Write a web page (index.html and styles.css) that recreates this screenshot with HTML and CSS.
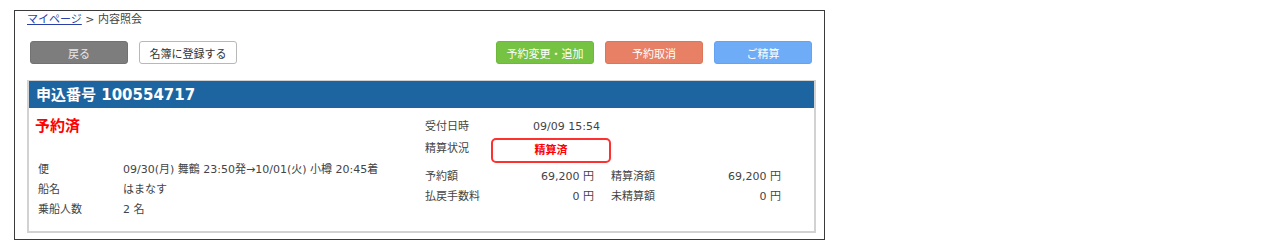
FILE: index.html
```html
<!DOCTYPE html>
<html lang="ja">
  <head>
    <meta charset="UTF-8" />
    <meta name="viewport" content="width=device-width, initial-scale=1.0" />
    <title>内容照会</title>
    <link rel="stylesheet" href="styles.css">
  </head>
  <body>
    <main class="frame">
      <nav class="breadcrumb">
        <a href="#">マイページ</a> &gt; 内容照会
      </nav>

      <div class="actions">
        <div class="actions__group">
          <button class="btn btn--back" type="button">戻る</button>
          <button class="btn btn--plain" type="button">名簿に登録する</button>
        </div>
        <div class="actions__group">
          <button class="btn btn--change" type="button">予約変更・追加</button>
          <button class="btn btn--cancel" type="button">予約取消</button>
          <button class="btn btn--pay" type="button">ご精算</button>
        </div>
      </div>

      <section class="card">
        <h1 class="card__title">申込番号 100554717</h1>

        <div class="card__body">
          <div class="trip">
            <p class="trip__status">予約済</p>
            <dl class="trip__rows">
              <dt>便</dt>
              <dd>09/30(月) 舞鶴 23:50発→10/01(火) 小樽 20:45着</dd>
              <dt>船名</dt>
              <dd>はまなす</dd>
              <dt>乗船人数</dt>
              <dd>2 名</dd>
            </dl>
          </div>

          <div class="payment">
            <dl class="payment__info">
              <dt>受付日時</dt>
              <dd>09/09 15:54</dd>
              <dt>精算状況</dt>
              <dd class="payment__state">精算済</dd>
            </dl>
            <dl class="payment__amounts">
              <dt>予約額</dt>
              <dd>69,200 円</dd>
              <dt>精算済額</dt>
              <dd>69,200 円</dd>
              <dt>払戻手数料</dt>
              <dd>0 円</dd>
              <dt>未精算額</dt>
              <dd>0 円</dd>
            </dl>
          </div>
        </div>
      </section>
    </main>
  </body>
</html>
```

FILE: styles.css
```css
html,
body {
  margin: 0;
  background: #fff;
  font-family: 'DejaVu Sans', 'Noto Sans CJK JP', sans-serif;
  font-size: 11px;
  color: #444;
}

dl,
dd,
p,
h1 {
  margin: 0;
}

.frame {
  box-sizing: border-box;
  width: 811px;
  height: 230px;
  margin: 10px 0 0 14px;
  padding: 0 8px 0 12px;
  border: 1px solid #3a3a3a;
}

.breadcrumb {
  height: 17px;
  line-height: 17px;
  color: #444;
}

.breadcrumb a {
  color: #2a3fa8;
}

.actions {
  display: flex;
  justify-content: space-between;
  margin: 13px 4px 16px 3px;
}

.actions__group {
  display: flex;
  gap: 11px;
}

.btn {
  box-sizing: border-box;
  width: 98px;
  height: 23px;
  padding: 0;
  border: 1px solid transparent;
  border-radius: 3px;
  font-family: inherit;
  font-size: 11px;
  color: #fff;
  cursor: pointer;
}

.btn--back {
  background: #7d7d7d;
  border-color: #727272;
  color: #e6e6e6;
}

.btn--plain {
  background: #fff;
  border-color: #b8b8b8;
  color: #333;
}

.btn--change {
  background: #76c343;
  border-color: #6db93b;
}

.btn--cancel {
  background: #e88065;
  border-color: #de7559;
}

.btn--pay {
  background: #6eacf8;
  border-color: #63a3f2;
}

.card {
  box-sizing: border-box;
  width: 789px;
  height: 153px;
  border: 2px solid #d2d2d2;
  border-top-width: 1px;
}

.card__title {
  height: 27px;
  line-height: 28px;
  padding-left: 7px;
  background: #1d65a0;
  color: #fff;
  font-size: 15px;
  font-weight: 700;
}

.card__body {
  display: flex;
}

.trip {
  width: 390px;
  padding: 9px 0 0 6px;
}

.trip__status {
  height: 18px;
  line-height: 18px;
  color: #f00;
  font-size: 15px;
  font-weight: 700;
}

.trip__rows {
  display: grid;
  grid-template-columns: 85px auto;
  row-gap: 4px;
  margin: 27px 0 0 3px;
  line-height: 16px;
}

.payment {
  padding: 11px 0 0 0;
}

.payment__info {
  display: grid;
  grid-template-columns: 66px 120px;
  align-items: center;
  line-height: 16px;
}

.payment__info dd:first-of-type {
  padding-left: 42px;
}

.payment__state {
  box-sizing: border-box;
  height: 25px;
  margin-top: 3px;
  line-height: 21px;
  border: 2px solid #ff3030;
  border-radius: 5px;
  text-align: center;
  color: #f00;
  font-weight: 700;
}

.payment__amounts {
  display: grid;
  grid-template-columns: 66px 103px 17px 66px 104px;
  row-gap: 4px;
  margin-top: 6px;
  line-height: 16px;
}

.payment__amounts dd {
  text-align: right;
}

.payment__amounts dt:nth-of-type(2),
.payment__amounts dt:nth-of-type(4) {
  grid-column: 4;
}
```
